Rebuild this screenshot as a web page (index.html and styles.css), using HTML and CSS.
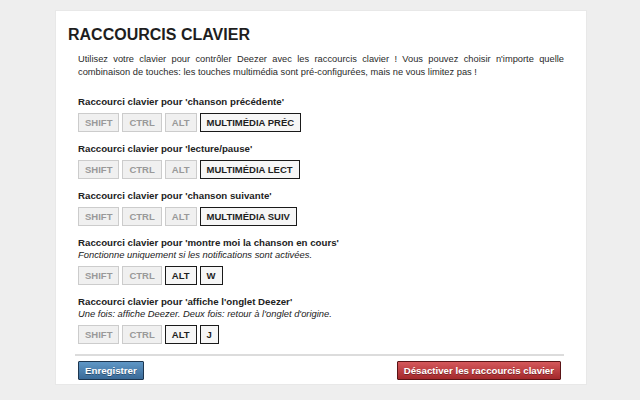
FILE: index.html
```html
<!DOCTYPE html>
<html lang="fr">
<head>
<meta charset="utf-8">
<title>Raccourcis clavier</title>
<link rel="stylesheet" href="styles.css">
</head>
<body>
<div class="card">
  <h1 class="title">RACCOURCIS CLAVIER</h1>
  <div class="content">
    <p class="intro">Utilisez votre clavier pour contrôler Deezer avec les raccourcis clavier ! Vous pouvez choisir n'importe quelle combinaison de touches: les touches multimédia sont pré-configurées, mais ne vous limitez pas !</p>

    <div class="shortcut">
      <div class="label">Raccourci clavier pour 'chanson précédente'</div>
      <div class="keys">
        <span class="key">SHIFT</span><span class="key">CTRL</span><span class="key">ALT</span><span class="key on">MULTIMÉDIA PRÉC</span>
      </div>
    </div>

    <div class="shortcut">
      <div class="label">Raccourci clavier pour 'lecture/pause'</div>
      <div class="keys">
        <span class="key">SHIFT</span><span class="key">CTRL</span><span class="key">ALT</span><span class="key on">MULTIMÉDIA LECT</span>
      </div>
    </div>

    <div class="shortcut">
      <div class="label">Raccourci clavier pour 'chanson suivante'</div>
      <div class="keys">
        <span class="key">SHIFT</span><span class="key">CTRL</span><span class="key">ALT</span><span class="key on">MULTIMÉDIA SUIV</span>
      </div>
    </div>

    <div class="shortcut">
      <div class="label">Raccourci clavier pour 'montre moi la chanson en cours'</div>
      <div class="note">Fonctionne uniquement si les notifications sont activées.</div>
      <div class="keys">
        <span class="key">SHIFT</span><span class="key">CTRL</span><span class="key on">ALT</span><span class="key on">W</span>
      </div>
    </div>

    <div class="shortcut">
      <div class="label">Raccourci clavier pour 'affiche l'onglet Deezer'</div>
      <div class="note">Une fois: affiche Deezer. Deux fois: retour à l'onglet d'origine.</div>
      <div class="keys">
        <span class="key">SHIFT</span><span class="key">CTRL</span><span class="key on">ALT</span><span class="key on">J</span>
      </div>
    </div>
  </div>
  <div class="footer">
    <button class="btn btn-save">Enregistrer</button>
    <button class="btn btn-disable">Désactiver les raccourcis clavier</button>
  </div>
</div>
</body>
</html>
```

FILE: styles.css
```css
html, body {
  margin: 0;
  padding: 0;
}
body {
  background: #eeeeee;
  font-family: "Liberation Sans", Arial, sans-serif;
  color: #222;
  width: 640px;
  height: 400px;
  overflow: hidden;
}
.card {
  box-sizing: border-box;
  margin: 10px 0 0 55px;
  width: 532px;
  height: 375px;
  background: #fff;
  border: 1px solid #e8e8e8;
  padding: 14px 22px 0 12px;
}
.title {
  margin: 0;
  font-size: 16px;
  line-height: 20px;
  font-weight: bold;
  color: #1e1e1e;
}
.content {
  padding-left: 10px;
}
.intro {
  margin: 8px 0 16px;
  font-size: 9.3px;
  line-height: 13px;
  text-align: justify;
  color: #2a2a2a;
}
.shortcut {
  margin-bottom: 10px;
}
.label {
  font-size: 9.7px;
  line-height: 13px;
  font-weight: bold;
  color: #222;
}
.note {
  font-size: 9.4px;
  line-height: 12px;
  font-style: italic;
  color: #222;
}
.keys {
  display: flex;
  gap: 3px;
  margin-top: 5px;
}
.key {
  box-sizing: border-box;
  height: 19px;
  line-height: 17px;
  padding: 0 6px;
  border: 1px solid #cccccc;
  background: #f0f0f0;
  color: #999999;
  font-size: 9.5px;
  font-weight: bold;
}
.key.on {
  border-color: #1a1a1a;
  background: #f6f6f6;
  color: #1e1e1e;
}
.footer {
  margin-left: 7px;
  border-top: 2px solid #dcdcdc;
  padding: 5px 3px 0;
  display: flex;
  justify-content: space-between;
}
.btn {
  box-sizing: border-box;
  height: 19px;
  padding: 0 6px;
  font-family: "Liberation Sans", Arial, sans-serif;
  font-size: 9.7px;
  font-weight: bold;
  color: #fff;
  text-shadow: 0 1px 0 rgba(0,0,0,0.35);
  border-radius: 1px;
  cursor: pointer;
}
.btn-save {
  background: linear-gradient(#5f97c6, #3a6a98);
  border: 1px solid #1d3650;
}
.btn-disable {
  background: linear-gradient(#d5585b, #a3292c);
  border: 1px solid #5a1416;
}
```
